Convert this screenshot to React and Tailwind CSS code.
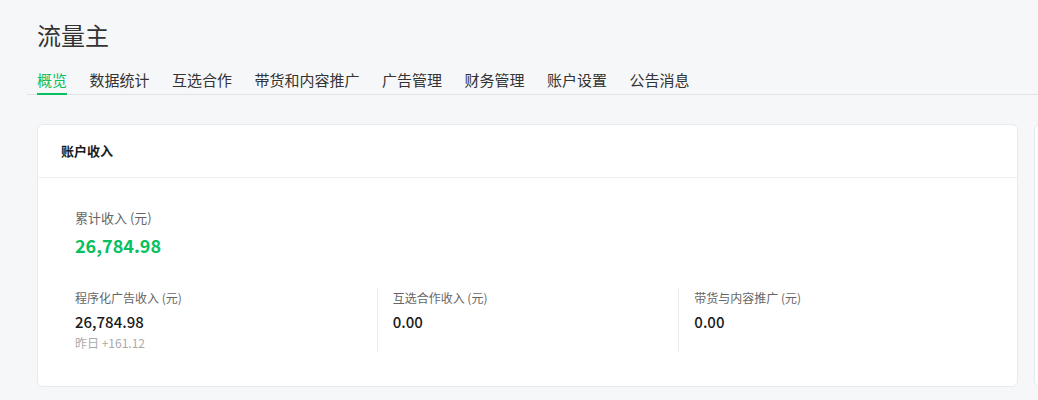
import React from 'react';

const tabs = ['概览', '数据统计', '互选合作', '带货和内容推广', '广告管理', '财务管理', '账户设置', '公告消息'];

const font = { fontFamily: '"Noto Sans CJK SC", sans-serif' };

const App = () => {
  return (
    <div className="h-[400px] w-[1038px] overflow-hidden bg-[#f6f7f9] text-[#333]" style={font}>
      {/* Header */}
      <div className="pl-[37px] pt-[18px]">
        <h1 className="text-[24px] leading-[34px] font-normal text-[#333]">流量主</h1>
      </div>

      {/* Tabs */}
      <div className="mt-[17px] ml-[27px] flex border-b border-[#e2e3e6] pl-[10px]">
        {tabs.map((t, i) => (
          <div
            key={t}
            className={`mr-[22.5px] pb-[2px] text-[15px] leading-[22px] -mb-px ${
              i === 0 ? 'text-[#07c160] border-b-2 border-[#07c160]' : 'text-[#333] border-b-2 border-transparent'
            }`}
          >
            {t}
          </div>
        ))}
      </div>

      {/* Cards */}
      <div className="mt-[29px] flex gap-[16px] pl-[37px]">
        <div className="w-[981px] shrink-0 rounded-[6px] border border-[#e9eaec] bg-white">
          <div className="flex h-[53px] items-center border-b border-[#eeeff1] px-[23px]">
            <span className="text-[13px] font-bold text-[#1a1a1a]">账户收入</span>
          </div>
          <div className="px-[37px] pt-[30px] pb-[33px]">
            <div className="text-[13px] leading-[20px] text-[#666]">累计收入 (元)</div>
            <div className="mt-[4px] text-[18px] leading-[26px] font-semibold text-[#07c160]">26,784.98</div>

            <div className="mt-[30px] grid grid-cols-3">
              <div className="h-[64px]">
                <div className="text-[12px] leading-[20px] text-[#666]">程序化广告收入 (元)</div>
                <div className="mt-[3px] text-[15px] leading-[22px] font-medium text-[#1a1a1a]">26,784.98</div>
                <div className="mt-[1px] text-[12px] leading-[18px] text-[#aaa]">昨日 +161.12</div>
              </div>
              <div className="h-[64px] border-l border-[#ebebeb] pl-[15px]">
                <div className="text-[12px] leading-[20px] text-[#666]">互选合作收入 (元)</div>
                <div className="mt-[3px] text-[15px] leading-[22px] font-medium text-[#1a1a1a]">0.00</div>
              </div>
              <div className="h-[64px] border-l border-[#ebebeb] pl-[15px]">
                <div className="text-[12px] leading-[20px] text-[#666]">带货与内容推广 (元)</div>
                <div className="mt-[3px] text-[15px] leading-[22px] font-medium text-[#1a1a1a]">0.00</div>
              </div>
            </div>
          </div>
        </div>
        <div className="h-[263px] w-[300px] shrink-0 rounded-[6px] border border-[#e9eaec] bg-white" />
      </div>
    </div>
  );
};

export default App;
